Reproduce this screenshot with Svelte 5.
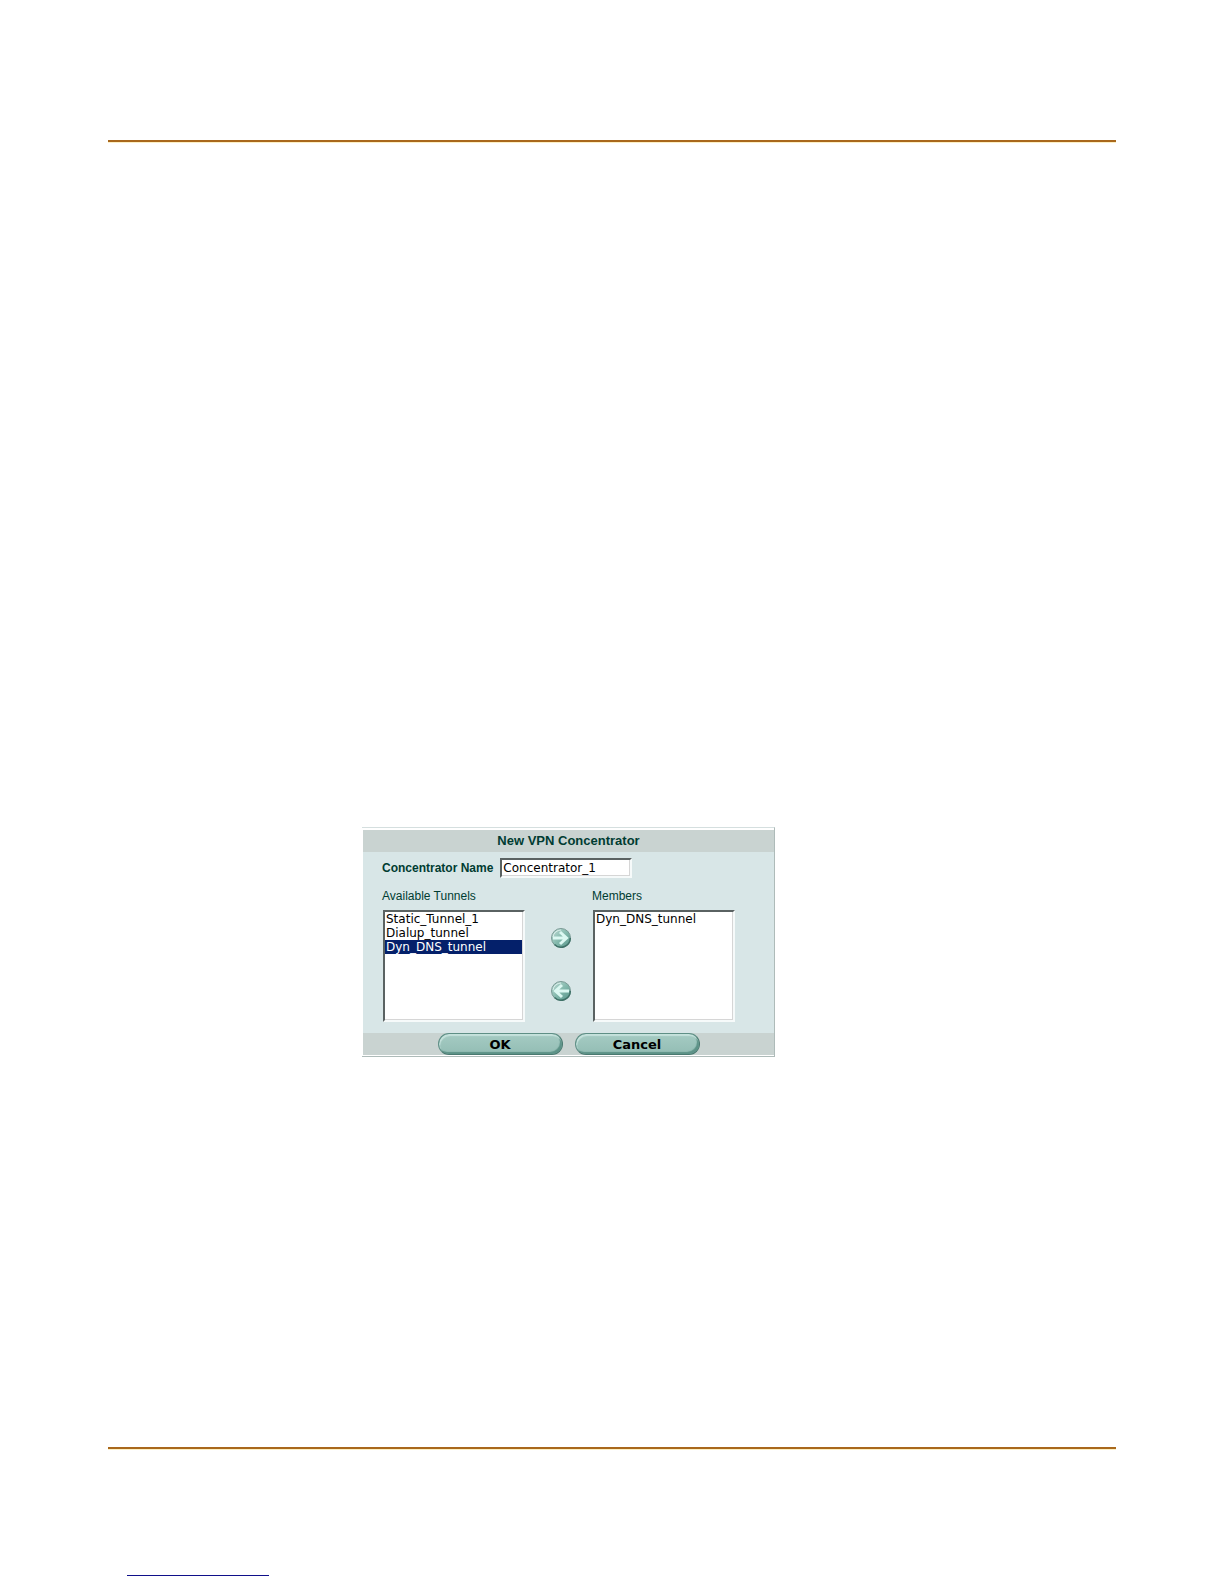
<script lang="ts">
  let name = $state("Concentrator_1");
  let available = $state(["Static_Tunnel_1", "Dialup_tunnel", "Dyn_DNS_tunnel"]);
  let members = $state(["Dyn_DNS_tunnel"]);
  let availableSelected = $state<string[]>(["Dyn_DNS_tunnel"]);
  let membersSelected = $state<string[]>([]);

  function addMembers() {
    const added = availableSelected.filter((t) => !members.includes(t));
    members = [...members, ...added];
  }

  function removeMembers() {
    members = members.filter((t) => !membersSelected.includes(t));
    membersSelected = [];
  }
</script>

<svelte:head>
  <title>New VPN Concentrator</title>
</svelte:head>

{#snippet arrow(direction: "right" | "left")}
  <svg viewBox="0 0 22 22" width="22" height="22" aria-hidden="true">
    <defs>
      <linearGradient id="ball-{direction}" x1="0" y1="0" x2="1" y2="1">
        <stop offset="0" stop-color="#c2ddd7" />
        <stop offset="0.5" stop-color="#84b9ad" />
        <stop offset="1" stop-color="#57958a" />
      </linearGradient>
    </defs>
    <circle cx="11" cy="11" r="9.5" fill="url(#ball-{direction})" stroke="#7a9a95" />
    <path d="M4.5 17.5A9.3 9.3 0 0 0 20.3 11" fill="none" stroke="#3f7268" stroke-width="1.5" />
    <path d="M3 10A8 8 0 0 1 11 3" fill="none" stroke="#dcefeb" stroke-width="1" />
    <g transform={direction === "left" ? "translate(22 0) scale(-1 1)" : undefined}>
      <path d="M3 11H16M10 5L16.5 11L10 17" fill="none" stroke="#dcf8f2" stroke-width="3" />
    </g>
  </svg>
{/snippet}

<div class="page">
  <hr class="rule" />

  <main>
    <form class="dialog" onsubmit={(e) => e.preventDefault()}>
      <h1>New VPN Concentrator</h1>

      <div class="body">
        <div class="name-row">
          <label for="name">Concentrator Name</label>
          <input id="name" type="text" bind:value={name} />
        </div>

        <div class="lists">
          <div class="list">
            <label for="available">Available Tunnels</label>
            <select id="available" multiple bind:value={availableSelected}>
              {#each available as tunnel (tunnel)}
                <option value={tunnel}>{tunnel}</option>
              {/each}
            </select>
          </div>

          <div class="arrows">
            <button type="button" aria-label="Add to members" onclick={addMembers}>
              {@render arrow("right")}
            </button>
            <button type="button" aria-label="Remove from members" onclick={removeMembers}>
              {@render arrow("left")}
            </button>
          </div>

          <div class="list">
            <label for="members">Members</label>
            <select id="members" multiple bind:value={membersSelected}>
              {#each members as tunnel (tunnel)}
                <option value={tunnel}>{tunnel}</option>
              {/each}
            </select>
          </div>
        </div>
      </div>

      <div class="actions">
        <button type="submit">OK</button>
        <button type="button">Cancel</button>
      </div>
    </form>
  </main>

  <hr class="rule" />
  <footer>
    <hr class="link-line" />
  </footer>
</div>

<style>
  :global(body) {
    margin: 0;
    background: #fff;
  }

  .page {
    box-sizing: border-box;
    display: flex;
    flex-direction: column;
    min-height: 100vh;
    padding: 140px 108px 0;
    font-family: "Liberation Sans", Arial, sans-serif;
  }

  .rule {
    width: 100%;
    height: 2px;
    margin: 0;
    border: none;
    background: #a9681c;
    box-shadow: 0 1px #fdf0c4;
    flex-shrink: 0;
  }

  main {
    flex: 1;
    padding: 685px 0 80px 254px;
  }

  .dialog {
    box-sizing: border-box;
    max-width: 413px;
    padding: 2px 0 1px 1px;
    border-top: 1px solid #d5dfdf;
    border-right: 1px solid #aebbb9;
    border-bottom: 1px solid #aebbb9;
    background: #fff;
    color: #003c32;
  }

  h1 {
    margin: 0;
    background: #c9d3d1;
    font-size: 13px;
    line-height: 22px;
    text-align: center;
  }

  .body {
    padding: 6px 19px 11px;
    background: #d8e6e7;
  }

  .name-row {
    display: flex;
    align-items: center;
    gap: 7px;
    font-size: 12px;
    font-weight: bold;
  }

  input,
  select {
    box-sizing: border-box;
    border: 2px solid;
    border-color: #5a6262 #f6fafa #f6fafa #5a6262;
    border-radius: 0;
    outline: none;
    background: #fff;
    box-shadow: inset -1px -1px #d6d6d6;
    color: #000;
    font-family: "DejaVu Sans", Verdana, sans-serif;
    font-size: 12px;
  }

  input {
    width: 132px;
    height: 20px;
    padding: 0 1px;
  }

  .lists {
    display: flex;
    padding-top: 10px;
  }

  .list {
    display: flex;
    flex-direction: column;
    gap: 6px;
    font-size: 12px;
    line-height: 16px;
  }

  select {
    width: 142px;
    height: 112px;
    margin-left: 1px;
    padding: 0 1px 0 0;
    overflow: hidden;
  }

  option {
    min-height: 0;
    padding: 0 1px;
    line-height: 13px;
  }

  option:checked {
    background: linear-gradient(#04206a, #04206a);
    -webkit-text-fill-color: #fff;
  }

  .arrows {
    display: flex;
    flex-direction: column;
    gap: 31px;
    padding: 39px 20px 0 25px;
  }

  .arrows button {
    display: block;
    padding: 0;
    border: none;
    background: none;
    cursor: pointer;
  }

  .arrows svg {
    display: block;
  }

  .actions {
    display: flex;
    justify-content: center;
    gap: 12px;
    background: #c9d3d1;
  }

  .actions button {
    width: 125px;
    height: 22px;
    padding: 0;
    border: 1px solid;
    border-color: #5f8f86 #4a7a70 #4a7a70 #5f8f86;
    border-radius: 11px;
    background: linear-gradient(#a5cbc3, #93bdb4);
    box-shadow: inset 1px 2px 1px #c5e2dc, inset -2px -2px 1px #5c9287;
    color: #000;
    font-family: "DejaVu Sans", Verdana, sans-serif;
    font-size: 13px;
    font-weight: bold;
    cursor: pointer;
  }

  footer {
    padding: 126px 19px 8px;
  }

  .link-line {
    width: 142px;
    height: 1px;
    margin: 0;
    border: none;
    background: #10108a;
  }
</style>
